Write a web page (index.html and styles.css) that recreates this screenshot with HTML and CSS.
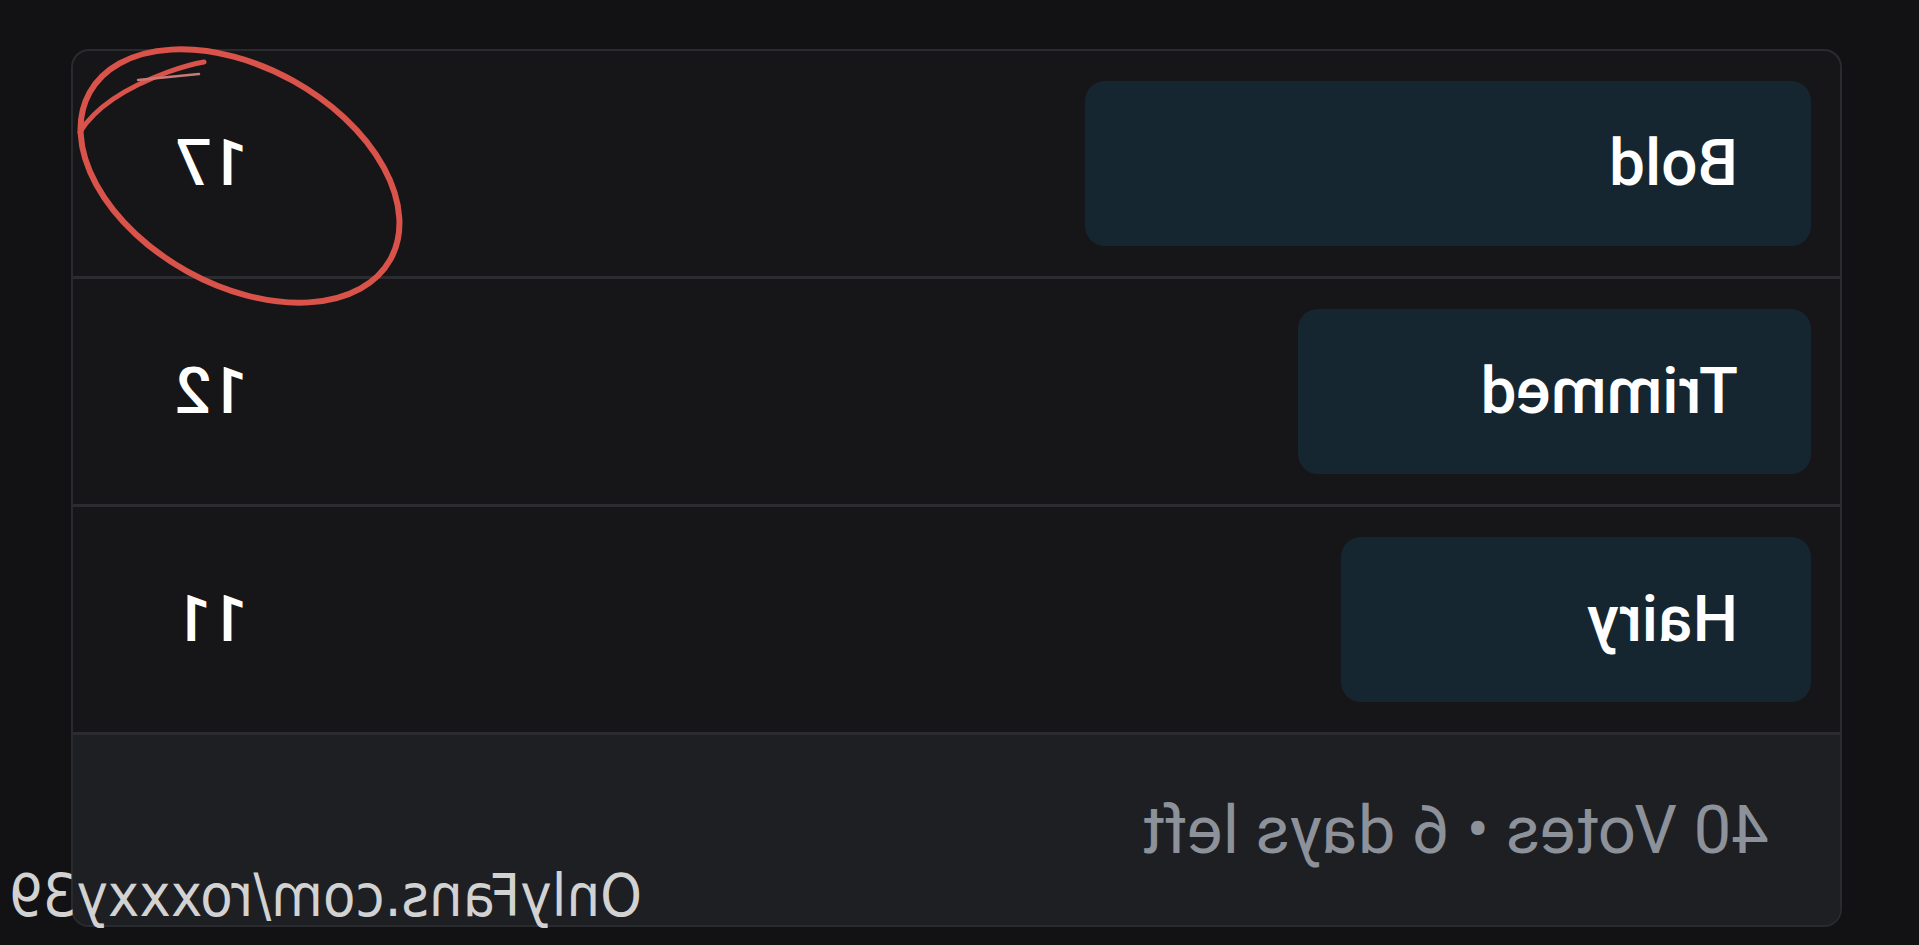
FILE: index.html
```html
<!DOCTYPE html>
<html lang="en">
<head>
  <meta charset="UTF-8" />
  <meta name="viewport" content="width=device-width, initial-scale=1.0"/>
  <title>Poll</title>

  <link rel="stylesheet" href="styles.css">
</head>

<body>
  <!-- the capture is mirrored, so the whole screen is flipped -->
  <div class="screen">
    <div class="poll">
      <div class="option">
        <div class="bar" style="width: 42.5%;">Bold</div>
        <div class="count">17</div>
      </div>
      <div class="option">
        <div class="bar" style="width: 30%;">Trimmed</div>
        <div class="count">12</div>
      </div>
      <div class="option">
        <div class="bar" style="width: 27.5%;">Hairy</div>
        <div class="count">11</div>
      </div>
      <div class="poll-footer">40 Votes &bull; 6 days left</div>
    </div>

    <div class="watermark">OnlyFans.com/roxxxy39</div>
  </div>

  <!-- red marker circle drawn over the capture -->
  <svg class="marker" width="1919" height="945" viewBox="0 0 1919 945">
    <ellipse cx="240" cy="176" rx="172" ry="109" transform="rotate(29 240 176)" fill="none" stroke="#d9534b" stroke-width="6"/>
    <path d="M 80 132 C 96 106, 130 86, 168 72 C 182 67, 192 64, 204 62" fill="none" stroke="#d9534b" stroke-width="5" stroke-linecap="round"/>
    <path d="M 138 80 L 199 74" fill="none" stroke="#c97a78" stroke-width="2.5" stroke-linecap="round"/>
  </svg>
</body>
</html>
```

FILE: styles.css
```css
html, body {
  margin: 0;
  padding: 0;
}

body {
  background: #121214;
  width: 1919px;
  height: 945px;
  overflow: hidden;
  position: relative;
  font-family: Roboto, 'Liberation Sans', sans-serif;
}

.screen {
  position: relative;
  height: 100%;
  padding-top: 49px;
  box-sizing: border-box;
  transform: scaleX(-1);
}

.poll {
  margin-left: 77px;
  width: 1771px;
  box-sizing: border-box;
  background: #161618;
  border: 2px solid #2a2b2e;
  border-radius: 18px;
  overflow: hidden;
}

.option {
  display: flex;
  align-items: center;
  padding: 30px 29px;
  border-bottom: 3px solid #2b2c2f;
}

.bar {
  height: 165px;
  box-sizing: border-box;
  padding-left: 73px;
  display: flex;
  align-items: center;
  background: #162630;
  border-radius: 20px;
  color: #fff;
  font-size: 64px;
  font-weight: 500;
}

.count {
  margin-left: auto;
  padding-right: 73px;
  color: #fff;
  font-size: 64px;
  font-weight: 500;
}

.poll-footer {
  height: 190px;
  display: flex;
  align-items: center;
  padding-left: 71px;
  background: #1e1f23;
  color: #8d9199;
  font-size: 67px;
}

/* Watermark */
.watermark {
  position: absolute;
  right: 9px;
  top: 866px;
  color: #d2d2d2;
  font-family: 'DejaVu Sans Condensed', 'DejaVu Sans', sans-serif;
  font-size: 59px;
  line-height: 1;
}

.marker {
  position: absolute;
  top: 0;
  left: 0;
  pointer-events: none;
}
```
